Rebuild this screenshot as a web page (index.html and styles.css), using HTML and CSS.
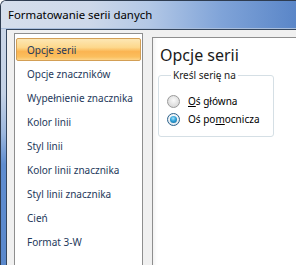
FILE: index.html
```html
<!DOCTYPE html>
<html>
<head>
<meta charset="utf-8">
<link rel="stylesheet" href="styles.css">
</head>
<body>
<div class="window">
  <div class="titlebar">Formatowanie serii danych</div>
  <div class="client">
    <div class="list">
      <div class="item selected">Opcje serii</div>
      <div class="item">Opcje znaczników</div>
      <div class="item">Wypełnienie znacznika</div>
      <div class="item">Kolor linii</div>
      <div class="item">Styl linii</div>
      <div class="item">Kolor linii znacznika</div>
      <div class="item">Styl linii znacznika</div>
      <div class="item">Cień</div>
      <div class="item">Format 3-W</div>
    </div>
    <div class="panel">
      <div class="heading">Opcje serii</div>
      <fieldset class="group">
        <legend class="legend">Kreśl serię na</legend>
        <div class="radio-row"><span class="radio"></span><span class="label"><u>O</u>ś główna</span></div>
        <div class="radio-row"><span class="radio checked"></span><span class="label">Oś po<u>m</u>ocnicza</span></div>
      </fieldset>
    </div>
  </div>
</div>
</body>
</html>
```
FILE: styles.css
```css
html, body {
  margin: 0;
  padding: 0;
}
body {
  width: 296px;
  height: 265px;
  overflow: hidden;
  background: #ffffff;
  font-family: "Noto Sans", "DejaVu Sans", sans-serif;
}
.window {
  height: 265px;
  box-sizing: border-box;
  border-top: 1px solid #2e3c50;
  border-left: 1px solid #2e3c50;
  border-top-left-radius: 6px;
  background: linear-gradient(180deg, #cdd8e8 0%, #c4d2e6 35%, #9db8de 50%, #5f8dd0 62%, #5a88cc 100%);
  display: flex;
  flex-direction: column;
}
.titlebar {
  height: 27px;
  border-bottom: 1px solid #a9bedc;
  padding-left: 7px;
  line-height: 28px;
  font-size: 11.4px;
  color: #000;
  background: linear-gradient(90deg, #d6dfec 0%, #cdd8ea 30%, #b3c8e6 50%, #7fa3d8 75%, #5a86c8 100%);
  border-top-left-radius: 5px;
}
.client {
  flex: 1;
  margin-left: 5px;
  border-top: 1px solid #34465e;
  border-left: 1px solid #34465e;
  background: #f0f0f0;
  display: flex;
  align-items: flex-start;
  gap: 9px;
  padding: 3px 0 0 7px;
  min-height: 0;
}
.list {
  width: 129px;
  box-sizing: border-box;
  height: 240px;
  border: 1px solid #8e8e8e;
  border-bottom: none;
  background: #fff;
  padding: 4px 1px 0 1px;
  flex-shrink: 0;
}
.item {
  height: 23px;
  box-sizing: border-box;
  margin-bottom: 1px;
  border: 1px solid transparent;
  border-radius: 2px;
  padding-left: 10px;
  line-height: 22px;
  font-size: 10px;
  color: #1e395b;
  white-space: nowrap;
}
.item + .item {
  line-height: 23px;
}
.item.selected {
  border-color: #d39f55;
  background: linear-gradient(180deg, #fde7b4 0%, #fdd88c 40%, #fbb451 60%, #fbbf5e 85%, #fdd58a 100%);
}
.panel {
  flex: 1;
  margin-top: 4px;
  height: 240px;
  border: 1px solid #8e8e8e;
  border-right: none;
  border-bottom: none;
  background: #fff;
  padding-left: 5px;
  box-shadow: inset 5px 0 4px -4px rgba(0,0,0,0.08);
}
.heading {
  margin: 7px 0 0 2px;
  font-size: 16px;
  line-height: 20px;
  color: #1a1a1a;
}
.group {
  width: 116px;
  box-sizing: border-box;
  margin: 3px 0 0 0;
  padding: 10px 0 8px 8px;
  border: 1px solid #d5dfe5;
  border-radius: 3px;
  min-width: 0;
}
.legend {
  padding: 0 2px;
  margin-left: 4px;
  font-size: 10px;
  color: #222;
}
.radio-row {
  display: flex;
  align-items: center;
  gap: 8px;
  height: 18px;
}
.radio {
  width: 13px;
  height: 13px;
  box-sizing: border-box;
  border-radius: 50%;
  border: 1px solid #9a9a9a;
  background: radial-gradient(circle at 50% 40%, #fafafa 0%, #e6e6e6 45%, #cfcfcf 100%);
  position: relative;
  flex-shrink: 0;
}
.radio.checked {
  border-color: #2c628b;
  background: radial-gradient(circle at 50% 40%, #ffffff 0%, #eef3f7 50%, #c9d8e4 100%);
}
.radio.checked::after {
  content: "";
  position: absolute;
  left: 2px;
  top: 2px;
  width: 7px;
  height: 7px;
  border-radius: 50%;
  background: radial-gradient(circle at 45% 35%, #a6e3fb 0%, #2ea0d8 45%, #11618f 100%);
}
.label {
  font-size: 10px;
  color: #000;
  white-space: nowrap;
}
```
